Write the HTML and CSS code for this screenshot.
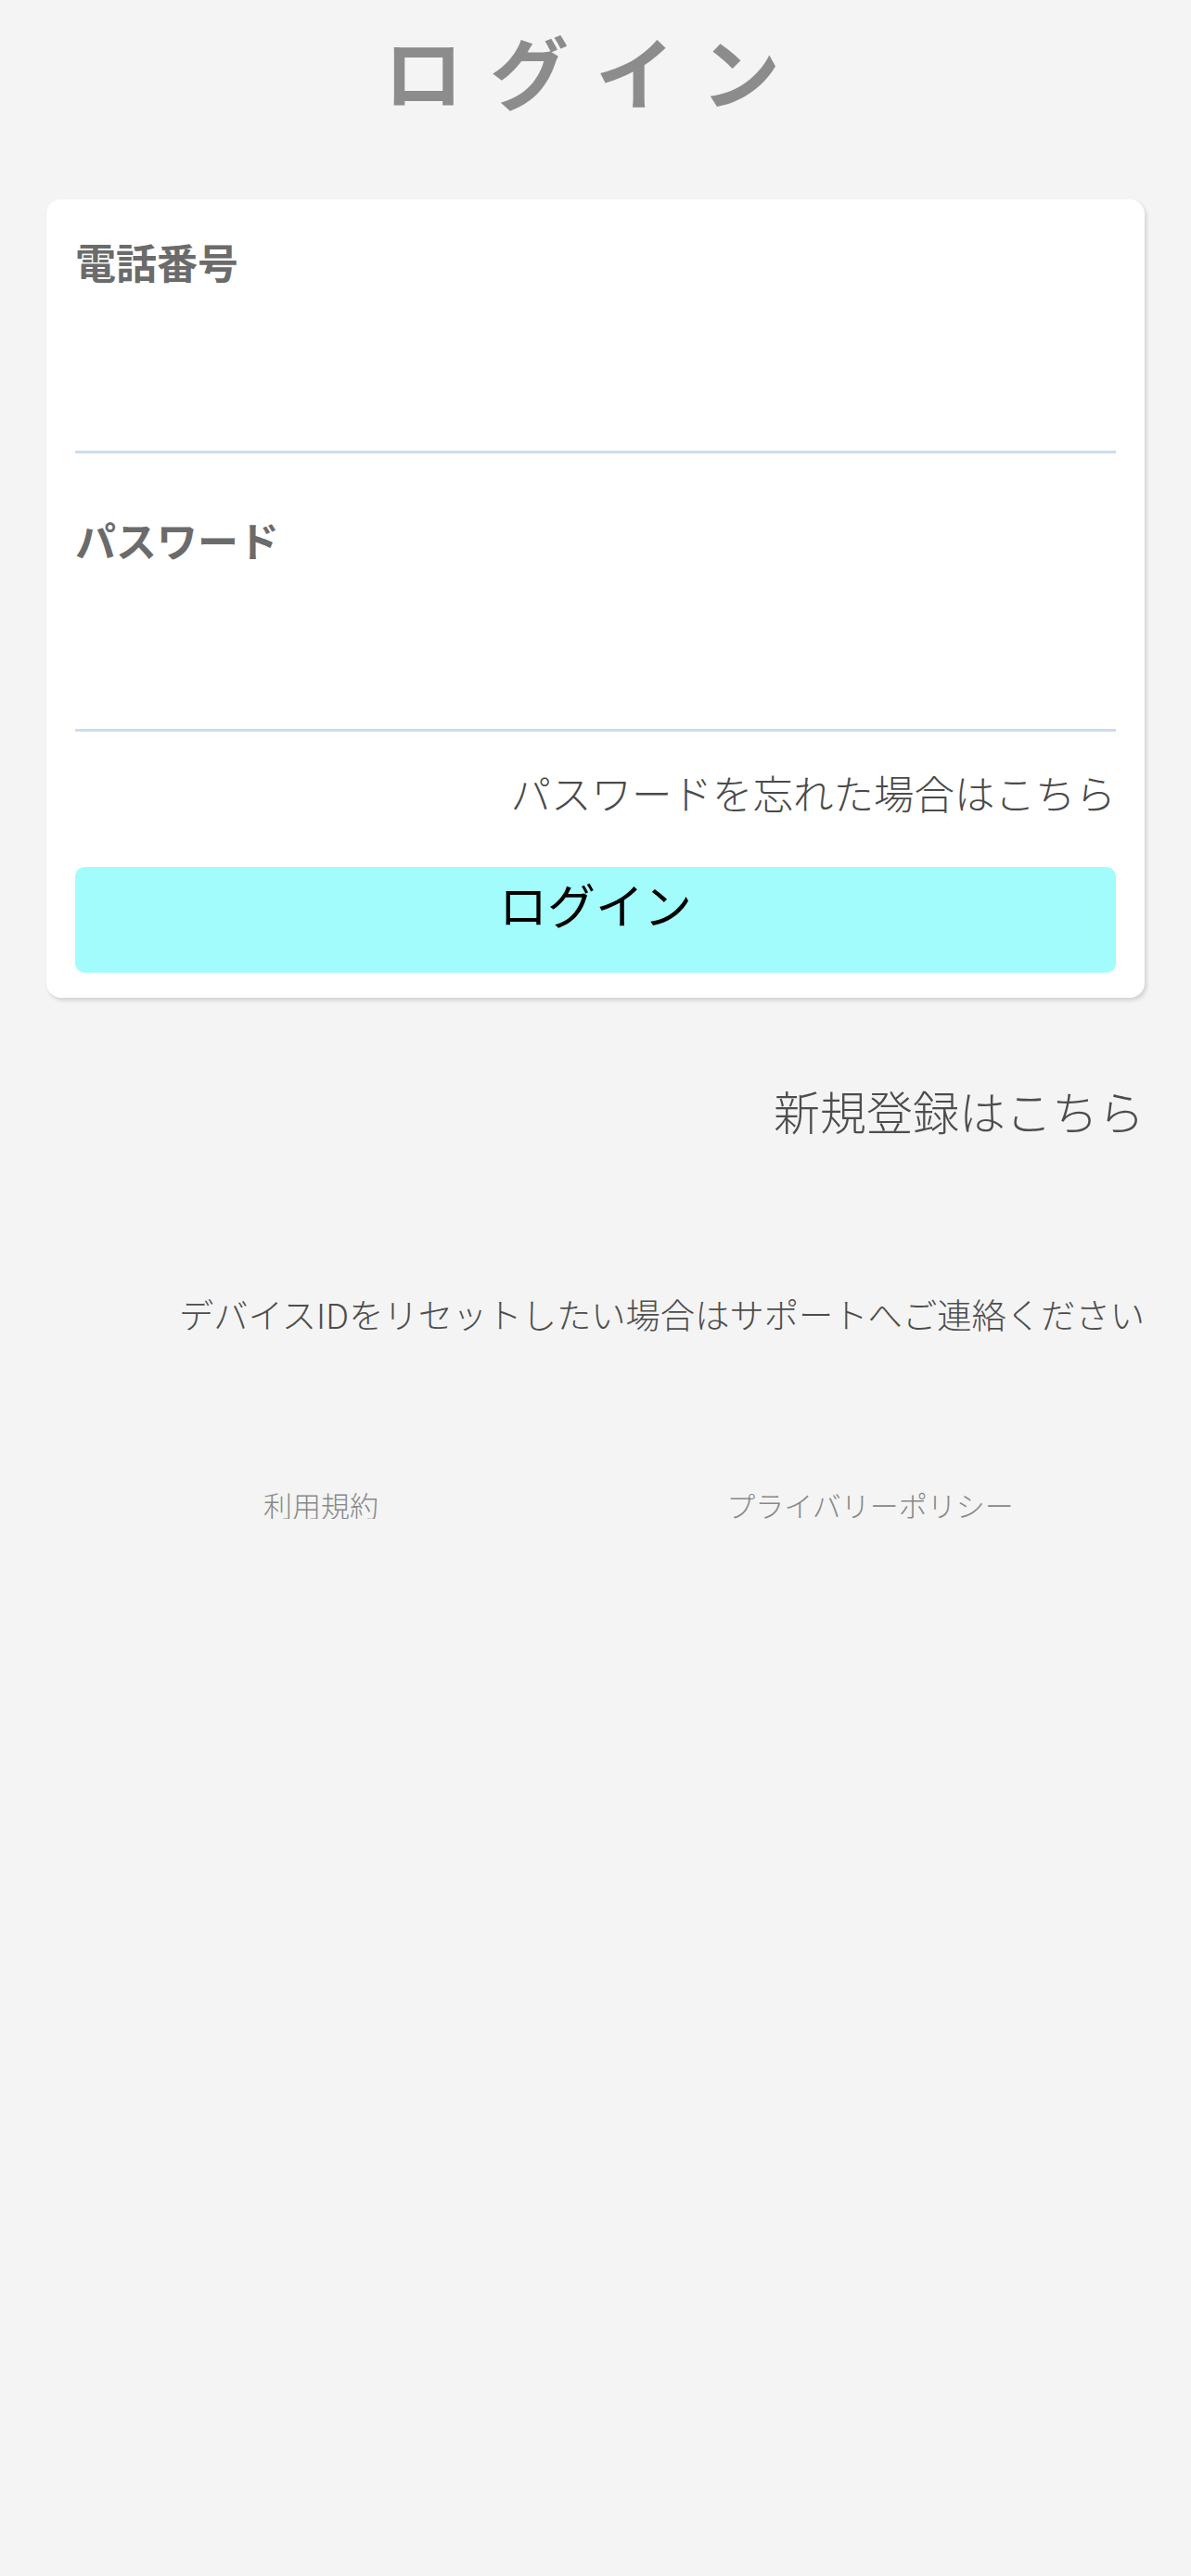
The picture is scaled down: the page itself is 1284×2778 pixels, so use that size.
FILE: index.html
```html
<!DOCTYPE HTML>
<html>
<head>
    <meta charset="utf-8">
    <title>ログイン</title>
    <link rel="stylesheet" href="styles.css">
</head>
<body>
    <h1 class="pageTitle">ログイン</h1>

    <div class="loginCard">
        <label class="fieldLabel" for="phone">電話番号</label>
        <input class="fieldInput" type="tel" id="phone">

        <label class="fieldLabel passLabel" for="pwd">パスワード</label>
        <input class="fieldInput" type="password" id="pwd">

        <div class="forgotRow">
            <a class="forgotLink" href="#">パスワードを忘れた場合はこちら</a>
        </div>

        <button class="loginBtn">ログイン</button>
    </div>

    <div class="registerRow">
        <a class="registerLink" href="#">新規登録はこちら</a>
    </div>

    <div class="deviceNote">デバイスIDをリセットしたい場合はサポートへご連絡ください</div>

    <div class="footerLinks">
        <a class="footLink" href="#">利用規約</a>
        <a class="footLink" href="#">プライバリーポリシー</a>
    </div>
</body>
</html>
```

FILE: styles.css
```css
body {
    margin: 0;
    background-color: #f4f4f4;
    font-family: "Noto Sans CJK JP", "Noto Sans", sans-serif;
}

a {
    text-decoration: none;
}

.pageTitle {
    margin: 0;
    padding-top: 32px;
    text-align: center;
    font-size: 85px;
    line-height: 85px;
    font-weight: 700;
    letter-spacing: 29px;
    color: #8c8c8c;
}

.loginCard {
    margin: 98px 50px 0 50px;
    padding: 45px 31px 27px 31px;
    background-color: #ffffff;
    border-radius: 16px;
    box-shadow: 2px 3px 4px rgba(0, 0, 0, 0.14);
}

.fieldLabel {
    display: block;
    font-size: 44px;
    line-height: 44px;
    font-weight: 700;
    color: #6b6b6b;
}

.passLabel {
    margin-top: 71px;
}

.fieldInput {
    display: block;
    width: 100%;
    height: 182px;
    box-sizing: content-box;
    margin: 0;
    padding: 0;
    border: none;
    border-bottom: 3px solid #cbdcef;
    background: transparent;
    outline: none;
    font-size: 44px;
}

.forgotRow {
    margin-top: 44px;
    text-align: right;
}

.forgotLink {
    font-size: 43.5px;
    line-height: 44px;
    font-weight: 300;
    color: #4a4a4a;
}

.loginBtn {
    display: block;
    width: 100%;
    height: 114px;
    margin-top: 57px;
    padding: 14px 0 48px 0;
    box-sizing: border-box;
    border: none;
    border-radius: 10px;
    background-color: #a2fcfb;
    font-family: "Noto Sans CJK JP", sans-serif;
    font-size: 52px;
    line-height: 52px;
    color: #000000;
    text-align: center;
}

.registerRow {
    margin: 96px 50px 0 50px;
    text-align: right;
}

.registerLink {
    display: inline-block;
    font-size: 50px;
    line-height: 50px;
    font-weight: 300;
    color: #4d4d4d;
}

.deviceNote {
    margin: 175px 50px 0 50px;
    text-align: right;
    font-size: 37.3px;
    line-height: 37px;
    font-weight: 300;
    color: #4d4d4d;
}

.footerLinks {
    display: flex;
    margin: 171px 50px 0 50px;
}

.footLink {
    flex: 1;
    text-align: center;
    font-size: 31px;
    line-height: 31px;
    font-weight: 300;
    color: #888888;
}
```
